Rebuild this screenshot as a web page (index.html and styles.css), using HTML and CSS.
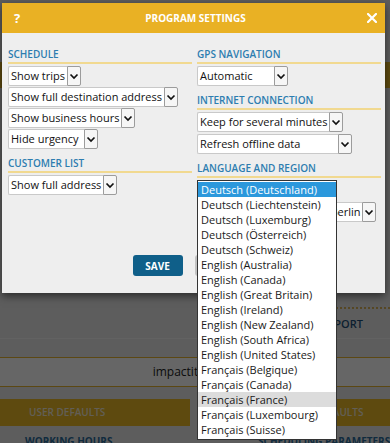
FILE: index.html
```html
<!DOCTYPE html>
<html>
<head>
<meta charset="utf-8">
<title>Program settings</title>
<link rel="stylesheet" href="styles.css">
</head>
<body>
<div class="page">
  <div class="page-top"><div class="page-banner"></div></div>
  <div class="page-cols">
    <div class="page-col"></div>
    <div class="page-col export-col"><span class="export-link">EXPORT</span></div>
  </div>
  <div class="page-strip"></div>
  <div class="company-row">impactit GmbH</div>
  <div class="tab-row">
    <div class="tab">USER DEFAULTS</div>
    <div class="tab tab-right">COMPANY DEFAULTS</div>
  </div>
  <div class="link-row">
    <div class="page-link">WORKING HOURS</div>
    <div class="page-link link-right">SCHEDULING PARAMETERS</div>
  </div>
</div>
<div class="overlay"></div>
<div class="dialog">
  <div class="dlg-header">
    <span class="dlg-help">?</span>
    <span class="dlg-title">PROGRAM SETTINGS</span>
    <span class="dlg-close"><svg width="10" height="10" viewBox="0 0 10 10"><path d="M1 1 L9 9 M9 1 L1 9" stroke="#fff" stroke-width="2.2" stroke-linecap="square"/></svg></span>
  </div>
  <div class="dlg-body">
    <div class="dlg-cols">
      <div class="dlg-col col-left">
        <div class="sec-title">SCHEDULE</div>
        <div class="sel-list">
          <div class="sel"><span class="sel-text">Show trips</span><span class="sel-arrow"><svg width="12" height="18" viewBox="0 0 12 18"><path d="M2.5 7.5 L6 11 L9.5 7.5" fill="none" stroke="#111" stroke-width="1.7"/></svg></span></div>
          <div class="sel"><span class="sel-text">Show full destination address</span><span class="sel-arrow"><svg width="12" height="18" viewBox="0 0 12 18"><path d="M2.5 7.5 L6 11 L9.5 7.5" fill="none" stroke="#111" stroke-width="1.7"/></svg></span></div>
          <div class="sel"><span class="sel-text">Show business hours</span><span class="sel-arrow"><svg width="12" height="18" viewBox="0 0 12 18"><path d="M2.5 7.5 L6 11 L9.5 7.5" fill="none" stroke="#111" stroke-width="1.7"/></svg></span></div>
          <div class="sel sel-urgency"><span class="sel-text">Hide urgency</span><span class="sel-arrow"><svg width="12" height="18" viewBox="0 0 12 18"><path d="M2.5 7.5 L6 11 L9.5 7.5" fill="none" stroke="#111" stroke-width="1.7"/></svg></span></div>
        </div>
        <div class="sec-title sec-next">CUSTOMER LIST</div>
        <div class="sel-list">
          <div class="sel"><span class="sel-text">Show full address</span><span class="sel-arrow"><svg width="12" height="18" viewBox="0 0 12 18"><path d="M2.5 7.5 L6 11 L9.5 7.5" fill="none" stroke="#111" stroke-width="1.7"/></svg></span></div>
        </div>
      </div>
      <div class="dlg-col col-right">
        <div class="sec-title">GPS NAVIGATION</div>
        <div class="sel-list">
          <div class="sel sel-gps"><span class="sel-text">Automatic</span><span class="sel-arrow"><svg width="12" height="18" viewBox="0 0 12 18"><path d="M2.5 7.5 L6 11 L9.5 7.5" fill="none" stroke="#111" stroke-width="1.7"/></svg></span></div>
        </div>
        <div class="sec-title sec-next">INTERNET CONNECTION</div>
        <div class="sel-list sel-list-wide">
          <div class="sel"><span class="sel-text">Keep for several minutes</span><span class="sel-arrow"><svg width="12" height="18" viewBox="0 0 12 18"><path d="M2.5 7.5 L6 11 L9.5 7.5" fill="none" stroke="#111" stroke-width="1.7"/></svg></span></div>
          <div class="sel sel-refresh"><span class="sel-text">Refresh offline data</span><span class="sel-arrow"><svg width="12" height="18" viewBox="0 0 12 18"><path d="M2.5 7.5 L6 11 L9.5 7.5" fill="none" stroke="#111" stroke-width="1.7"/></svg></span></div>
        </div>
        <div class="sec-title sec-next">LANGUAGE AND REGION</div>
        <div class="sel-list sel-list-wide">
          <div class="sel sel-lang"><span class="sel-text">Deutsch (Deutschland)</span><span class="sel-arrow"><svg width="12" height="18" viewBox="0 0 12 18"><path d="M2.5 7.5 L6 11 L9.5 7.5" fill="none" stroke="#111" stroke-width="1.7"/></svg></span>
            <ul class="dropdown">
              <li class="opt opt-selected">Deutsch (Deutschland)</li>
              <li class="opt">Deutsch (Liechtenstein)</li>
              <li class="opt">Deutsch (Luxemburg)</li>
              <li class="opt">Deutsch (Österreich)</li>
              <li class="opt">Deutsch (Schweiz)</li>
              <li class="opt">English (Australia)</li>
              <li class="opt">English (Canada)</li>
              <li class="opt">English (Great Britain)</li>
              <li class="opt">English (Ireland)</li>
              <li class="opt">English (New Zealand)</li>
              <li class="opt">English (South Africa)</li>
              <li class="opt">English (United States)</li>
              <li class="opt">Français (Belgique)</li>
              <li class="opt">Français (Canada)</li>
              <li class="opt opt-hover">Français (France)</li>
              <li class="opt">Français (Luxembourg)</li>
              <li class="opt">Français (Suisse)</li>
            </ul>
          </div>
          <div class="sel sel-tz"><span class="sel-text">(UTC+01:00) Amsterdam, Berlin</span><span class="sel-arrow"><svg width="12" height="18" viewBox="0 0 12 18"><path d="M2.5 7.5 L6 11 L9.5 7.5" fill="none" stroke="#111" stroke-width="1.7"/></svg></span></div>
        </div>
      </div>
    </div>
    <div class="dlg-actions">
      <button class="btn btn-save">SAVE</button>
      <button class="btn btn-cancel">CANCEL</button>
    </div>
  </div>
</div>
</body>
</html>
```

FILE: styles.css
```css
* { box-sizing: border-box; }

html, body {
  margin: 0;
  padding: 0;
}

body {
  width: 390px;
  height: 443px;
  overflow: hidden;
  position: relative;
  font-family: "Open Sans", "Liberation Sans", sans-serif;
  background: #e8e8e8;
  color: #222;
}

/* ---------- background page ---------- */
.page {
  height: 443px;
  overflow: hidden;
}

.page-top {
  height: 300px;
  padding-top: 62px;
}

.page-banner {
  height: 26px;
  background: #eab827;
}

.page-cols {
  display: grid;
  grid-template-columns: 1fr 1fr;
  column-gap: 10px;
  padding-top: 7px;
  border-bottom: 1px solid #f6f6f6;
}

.export-col {
  height: 31px;
  border-top: 2px dotted #d8b25a;
  display: flex;
  align-items: center;
  justify-content: flex-end;
  padding-right: 27px;
}

.export-link {
  font-size: 11px;
  font-weight: 600;
  color: #1d4f78;
  white-space: nowrap;
}

.page-strip {
  height: 18px;
}

.company-row {
  border-top: 1px solid #e6b431;
  border-bottom: 1px solid #e6b431;
  background: #ffffff;
  height: 30px;
  line-height: 28px;
  font-size: 12px;
  color: #222;
  text-align: center;
}

.tab-row {
  margin-top: 12px;
  display: grid;
  grid-template-columns: 190px 190px;
  column-gap: 10px;
}

.tab {
  height: 27px;
  line-height: 27px;
  background: #eab827;
  color: #f4ecd6;
  font-size: 10px;
  font-weight: 600;
  padding-left: 29px;
  white-space: nowrap;
  overflow: hidden;
}

.tab.tab-right {
  padding-left: 62px;
}

.link-row {
  margin-top: 7px;
  display: grid;
  grid-template-columns: 195px 195px;
}

.page-link {
  font-size: 10px;
  font-weight: 700;
  line-height: 16px;
  color: #2b6c9c;
  padding-left: 25px;
  white-space: nowrap;
  overflow: hidden;
}

.page-link.link-right {
  padding-left: 63px;
}

.overlay {
  position: absolute;
  inset: 0;
  background: rgba(0, 0, 0, 0.6);
}

/* ---------- dialog ---------- */
.dialog {
  position: absolute;
  left: 2px;
  top: 3px;
  width: 383px;
  background: #eeeeee;
  box-shadow: 0 3px 8px rgba(0, 0, 0, 0.55);
}

.dlg-header {
  height: 30px;
  background: #e9b124;
  display: grid;
  grid-template-columns: 1fr auto 1fr;
  align-items: center;
  padding: 0 8px 0 12px;
  color: #fff;
}

.dlg-help {
  font-size: 13px;
  font-weight: 700;
  line-height: 1;
}

.dlg-title {
  font-size: 10px;
  font-weight: 700;
}

.dlg-close {
  justify-self: end;
  display: flex;
  align-items: center;
}

.dlg-body {
  padding: 14px 4px 17px 6px;
}

.dlg-cols {
  display: grid;
  grid-template-columns: 184px 184px;
  column-gap: 5px;
  align-items: start;
}

.dlg-col {
  min-width: 0;
}

.sec-title {
  font-size: 10px;
  font-weight: 600;
  line-height: 14px;
  color: #2d7db0;
  padding-bottom: 1px;
  border-bottom: 2px solid #f1d990;
  margin-bottom: 2px;
  white-space: nowrap;
}

.sec-title.sec-next {
  margin-top: 7px;
}

.sel-list {
  display: flex;
  flex-direction: column;
  align-items: flex-start;
  gap: 1px;
}

.sel-list.sel-list-wide {
  gap: 2px;
}

.sel {
  position: relative;
  display: flex;
  height: 20px;
  font-size: 11px;
  line-height: 18px;
  color: #111;
}

.sel-text {
  flex: 1 1 auto;
  background: #ffffff;
  border: 1px solid #c9c9c9;
  border-right: none;
  border-radius: 2px 0 0 2px;
  padding: 0 2px;
  white-space: nowrap;
  overflow: hidden;
}

.sel-arrow {
  flex: 0 0 14px;
  width: 14px;
  background: #f6f6f6;
  border: 1px solid #9c9c9c;
  border-radius: 0 2px 2px 0;
  display: flex;
  align-items: center;
  justify-content: center;
}

.sel-urgency { width: 90px; }
.sel-gps { width: 91px; }
.sel-refresh { width: 155px; }
.sel-lang { width: 138px; }
.sel-tz { width: 179px; }

/* open language list */
.dropdown {
  position: absolute;
  left: 0;
  top: 0;
  width: 140px;
  margin: 0;
  padding: 1px 0 2px;
  list-style: none;
  background: #ffffff;
  border: 1px solid #333333;
  z-index: 5;
}

.opt {
  height: 15px;
  line-height: 15px;
  padding-left: 3px;
  font-size: 11px;
  color: #1a1a1a;
  white-space: nowrap;
}

.opt-selected {
  background: #2b98dc;
  color: #ffffff;
}

.opt-hover {
  background: #dcdcdc;
}

.dlg-actions {
  margin-top: 33px;
  display: flex;
  justify-content: center;
  gap: 12px;
  padding-left: 1px;
}

.btn {
  height: 21px;
  border: none;
  border-radius: 3px;
  font-family: "Open Sans", "Liberation Sans", sans-serif;
  font-size: 10px;
  font-weight: 700;
  padding: 0;
}

.btn-save {
  width: 50px;
  background: #0f5f89;
  color: #ffffff;
}

.btn-cancel {
  width: 63px;
  background: #c2c2c2;
  color: #333333;
}
```
